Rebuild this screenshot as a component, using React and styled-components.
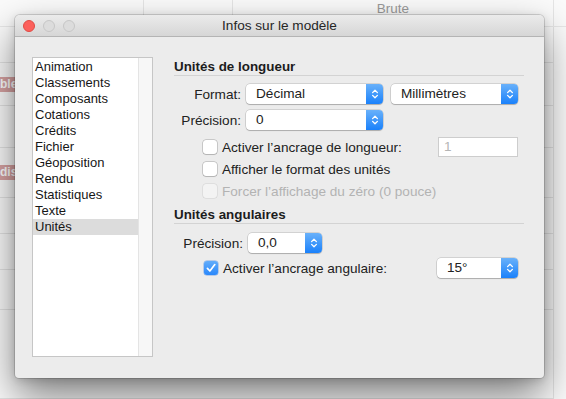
import styled, { createGlobalStyle } from 'styled-components';

const GlobalStyle = createGlobalStyle`
  html, body {
    margin: 0;
    padding: 0;
    background: #fbfbfb;
  }
  * {
    box-sizing: border-box;
  }
`;

const categories = [
  'Animation',
  'Classements',
  'Composants',
  'Cotations',
  'Crédits',
  'Fichier',
  'Géoposition',
  'Rendu',
  'Statistiques',
  'Texte',
  'Unités'
];

// background app rows (heights give the faint table lines behind the sheet)
const backRows = [
  { h: 36 },
  { h: 43, tag: 'ble' },
  { h: 42 },
  { h: 50, tag: 'dis' },
  { h: 36 },
  { h: 36 },
  { h: 40 },
  { h: 89 }
];

function Chevrons() {
  return (
    <svg width="8" height="12" viewBox="0 0 8 12">
      <path d="M1.6 4.6 L4 2.2 L6.4 4.6" fill="none" stroke="#fff" strokeWidth="1.3" strokeLinecap="round" strokeLinejoin="round" />
      <path d="M1.6 7.4 L4 9.8 L6.4 7.4" fill="none" stroke="#fff" strokeWidth="1.3" strokeLinecap="round" strokeLinejoin="round" />
    </svg>
  );
}

function Popup({ value, width }) {
  return (
    <PopupBox width={width}>
      <PopupValue>{value}</PopupValue>
      <PopupArrows>
        <Chevrons />
      </PopupArrows>
    </PopupBox>
  );
}

function Check({ checked, disabled, label, indent }) {
  return (
    <CheckLabel indent={indent} disabled={disabled}>
      <CheckBox checked={checked} disabled={disabled}>
        {checked && (
          <svg width="14" height="14" viewBox="0 0 14 14">
            <path d="M3.4 7.4 L5.9 10 L10.8 3.6" fill="none" stroke="#fff" strokeWidth="1.7" strokeLinecap="round" strokeLinejoin="round" />
          </svg>
        )}
      </CheckBox>
      <span>{label}</span>
    </CheckLabel>
  );
}

export default function App() {
  return (
    <>
      <GlobalStyle />
      <Page>
        <Backdrop>
          <HeaderRow>
            <HeaderCell width={144} />
            <HeaderCell width={89} />
            <HeaderCell width={321}>Brute</HeaderCell>
          </HeaderRow>
          {backRows.map((r, i) => (
            <BackRow key={i} height={r.h}>
              <EdgeCell>{r.tag && <Tag>{r.tag}</Tag>}</EdgeCell>
            </BackRow>
          ))}
        </Backdrop>

        <Window>
          <TitleBar>
            <Lights>
              <Light color="#fc605b" border="#de4b45" />
              <Light color="#dcdcdc" border="#c6c6c6" />
              <Light color="#dcdcdc" border="#c6c6c6" />
            </Lights>
            <Title>Infos sur le modèle</Title>
            <span />
          </TitleBar>

          <Body>
            <Sidebar>
              <List>
                {categories.map((c) => (
                  <ListItem key={c} selected={c === 'Unités'}>{c}</ListItem>
                ))}
              </List>
              <ScrollTrack />
            </Sidebar>

            <Panel>
              <SectionTitle>Unités de longueur</SectionTitle>
              <FieldRow top={8}>
                <FieldLabel width={67}>Format:</FieldLabel>
                <Popup value="Décimal" width={137} />
                <Popup value="Millimètres" width={127} />
              </FieldRow>
              <FieldRow top={6}>
                <FieldLabel width={67}>Précision:</FieldLabel>
                <Popup value="0" width={137} />
              </FieldRow>
              <OptionRow top={7}>
                <Check indent={29} label="Activer l’ancrage de longueur:" />
                <TextField disabled>1</TextField>
              </OptionRow>
              <OptionRow top={2}>
                <Check indent={29} label="Afficher le format des unités" />
              </OptionRow>
              <OptionRow top={2}>
                <Check indent={29} disabled label="Forcer l’affichage du zéro (0 pouce)" />
              </OptionRow>

              <SectionTitle top={6}>Unités angulaires</SectionTitle>
              <FieldRow top={9}>
                <FieldLabel width={69}>Précision:</FieldLabel>
                <Popup value="0,0" width={74} />
              </FieldRow>
              <OptionRow top={5}>
                <Check indent={30} checked label="Activer l’ancrage angulaire:" />
                <RightControl>
                  <Popup value="15°" width={81} />
                </RightControl>
              </OptionRow>
            </Panel>
          </Body>
        </Window>
      </Page>
    </>
  );
}

const Page = styled.div`
  position: relative;
  width: 566px;
  height: 399px;
  overflow: hidden;
  background: #fbfbfb;
  font-family: 'Liberation Sans', Arial, sans-serif;
`;

const Backdrop = styled.div`
  display: flex;
  flex-direction: column;
  width: 566px;
  height: 399px;
`;

const HeaderRow = styled.div`
  display: flex;
  height: 27px;
  border-bottom: 1px solid #e8e8e8;
`;

const HeaderCell = styled.div`
  width: ${(props) => props.width}px;
  border-right: 1px solid #e6e6e6;
  display: flex;
  justify-content: center;
  padding-top: 1px;
  font-size: 13.5px;
  line-height: 15px;
  color: #9a9a9a;
`;

const BackRow = styled.div`
  height: ${(props) => props.height}px;
  width: 554px;
  border-bottom: 1px solid #e4e4e4;
  border-right: 1px solid #e4e4e4;
  display: flex;
  align-items: center;
`;

const EdgeCell = styled.div`
  width: 22px;
  display: flex;
`;

const Tag = styled.span`
  display: block;
  width: 22px;
  padding-left: 0;
  background: #d8a3a3;
  color: #fff;
  font-weight: 700;
  font-size: 12px;
  line-height: 15px;
`;

const Window = styled.div`
  position: absolute;
  left: 15px;
  top: 15px;
  width: 529px;
  height: 363px;
  background: #ececec;
  border-radius: 5px 5px 4px 4px;
  box-shadow: 0 0 0 1px rgba(0, 0, 0, 0.14), 0 18px 40px rgba(0, 0, 0, 0.5), 0 2px 10px rgba(0, 0, 0, 0.15);
  overflow: hidden;
  display: flex;
  flex-direction: column;
`;

const TitleBar = styled.div`
  height: 22px;
  flex-shrink: 0;
  display: grid;
  grid-template-columns: 1fr auto 1fr;
  align-items: center;
  background: linear-gradient(#ebebeb, #d6d6d6);
  border-bottom: 1px solid #b4b4b4;
`;

const Lights = styled.div`
  display: flex;
  gap: 8px;
  padding-left: 8px;
`;

const Light = styled.span`
  width: 12px;
  height: 12px;
  border-radius: 50%;
  background: ${(props) => props.color};
  border: 0.5px solid ${(props) => props.border};
`;

const Title = styled.div`
  font-size: 13.6px;
  color: #262626;
  line-height: 16px;
`;

const Body = styled.div`
  flex: 1;
  display: flex;
  gap: 21px;
  padding: 20px 20px 20px 17px;
`;

const Sidebar = styled.div`
  width: 121px;
  height: 300px;
  display: flex;
  border: 1px solid #c6c6c6;
  background: #fff;
`;

const List = styled.div`
  width: 105px;
  padding-top: 1px;
  display: flex;
  flex-direction: column;
`;

const ListItem = styled.div`
  height: 16px;
  line-height: 16px;
  padding-left: 2px;
  font-size: 13px;
  color: #161616;
  background: ${(props) => (props.selected ? '#dcdcdc' : 'transparent')};
`;

const ScrollTrack = styled.div`
  flex: 1;
  background: #f7f7f7;
  border-left: 1px solid #e4e4e4;
`;

const Panel = styled.div`
  flex: 1;
  display: flex;
  flex-direction: column;
  padding-top: 2px;
`;

const SectionTitle = styled.div`
  margin-top: ${(props) => props.top || 0}px;
  height: 17px;
  line-height: 16px;
  font-size: 13.4px;
  font-weight: 700;
  color: #1c1c1c;
  border-bottom: 1px solid #d3d3d3;
`;

const FieldRow = styled.div`
  margin-top: ${(props) => props.top}px;
  height: 20px;
  display: flex;
  align-items: center;
  gap: 8px;
`;

const FieldLabel = styled.div`
  width: ${(props) => props.width}px;
  margin-right: -3px;
  text-align: right;
  font-size: 13.6px;
  color: #222;
`;

const PopupBox = styled.div`
  width: ${(props) => props.width}px;
  height: 20px;
  display: flex;
  border-radius: 4px;
  background: #fff;
  box-shadow: 0 0 0 0.5px rgba(0, 0, 0, 0.22), 0 1px 1px rgba(0, 0, 0, 0.18);
  overflow: hidden;
`;

const PopupValue = styled.div`
  flex: 1;
  padding-left: 10px;
  font-size: 13.6px;
  line-height: 20px;
  color: #222;
  white-space: nowrap;
`;

const PopupArrows = styled.div`
  width: 17px;
  display: flex;
  align-items: center;
  justify-content: center;
  background: linear-gradient(#69b1fa, #1a81fb);
`;

const OptionRow = styled.div`
  margin-top: ${(props) => props.top}px;
  height: 20px;
  display: flex;
  align-items: center;
  padding-right: 6px;
`;

const CheckLabel = styled.label`
  display: flex;
  align-items: center;
  gap: 5px;
  padding-left: ${(props) => props.indent}px;
  font-size: 13.6px;
  color: ${(props) => (props.disabled ? '#b3b3b3' : '#222')};
  white-space: nowrap;
`;

const CheckBox = styled.span`
  width: 14px;
  height: 14px;
  border-radius: 3px;
  display: flex;
  background: ${(props) =>
    props.checked ? 'linear-gradient(#62acfa, #2a88fb)' : props.disabled ? '#f3f3f3' : '#fff'};
  box-shadow: ${(props) =>
    props.checked
      ? '0 0 0 0.5px rgba(20, 100, 220, 0.5)'
      : props.disabled
      ? '0 0 0 0.5px rgba(0, 0, 0, 0.12)'
      : '0 0 0 0.5px rgba(0, 0, 0, 0.3), 0 1px 1px rgba(0, 0, 0, 0.1)'};
`;

const TextField = styled.div`
  margin-left: auto;
  width: 80px;
  height: 20px;
  padding-left: 5px;
  border: 1px solid #cdcdcd;
  background: #fff;
  font-size: 13.6px;
  line-height: 18px;
  color: #b5b5b5;
`;

const RightControl = styled.div`
  margin-left: auto;
`;
